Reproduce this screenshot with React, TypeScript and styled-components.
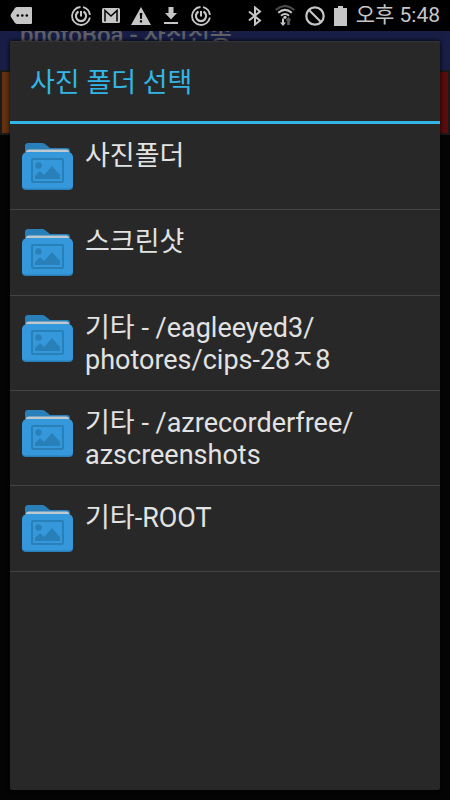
import React from "react";
import styled, { createGlobalStyle } from "styled-components";

const GlobalStyle = createGlobalStyle`
  * { box-sizing: border-box; }
  body {
    margin: 0;
    background: #040404;
    color: #e2e2e2;
    font-family: Roboto, "Noto Sans CJK KR", sans-serif;
  }
`;

const Screen = styled.div`
  position: relative;
  display: flex;
  flex-direction: column;
  min-height: 100vh;
  overflow: hidden;
`;

const StatusBar = styled.header`
  position: relative;
  z-index: 1;
  display: flex;
  justify-content: space-between;
  align-items: center;
  height: 31px;
  padding: 0 10px;
  background: #000;
  color: #c6c6c6;
`;

const StatusGroup = styled.div`
  display: flex;
  align-items: center;
  gap: 10px;
`;

const StatusEnd = styled(StatusGroup)`
  gap: 9px;
`;

const IconSlot = styled.span`
  display: flex;
  justify-content: center;
  width: 20px;
`;

const MoreSlot = styled.span`
  display: flex;
  margin-right: 29px;
`;

const Clock = styled.time`
  font-size: 21px;
  line-height: 31px;
  font-weight: 400;
  white-space: nowrap;
`;

const Icon = styled.svg`
  display: block;
  flex: none;
`;

const AppBar = styled.div`
  height: 39px;
  padding: 0 20px;
  background: #171d45;
`;

const AppTitle = styled.h1`
  margin: -9px 0 0;
  font-size: 24px;
  line-height: 26px;
  font-weight: 500;
  color: #5f6065;
  white-space: nowrap;
`;

const ActionStrip = styled.div`
  display: flex;
  justify-content: space-between;
  height: 65px;
  padding: 2px;
  background: #1a1a1a;
`;

const ActionBlock = styled.div<{ $color: string }>`
  flex: 1;
  background: ${(p) => p.$color};
`;

const Dialog = styled.section`
  position: absolute;
  inset: 41px 10px 10px;
  display: flex;
  flex-direction: column;
  background: #282828;
  border-radius: 2px;
  box-shadow: 0 0 4px #000, inset 0 1px 0 #343434;
`;

const DialogTitle = styled.h2`
  margin: 0;
  padding: 26px 20px 22px;
  font-size: 27px;
  line-height: 32px;
  font-weight: 400;
  color: #33b5e5;
  border-bottom: 3px solid #33b5e5;
`;

const FolderList = styled.ul`
  margin: 0;
  padding: 0;
  list-style: none;
`;

const FolderItem = styled.li`
  border-bottom: 1px solid #434343;
`;

const FolderButton = styled.button`
  display: flex;
  align-items: flex-start;
  gap: 12px;
  width: 100%;
  padding: 0 12px;
  border: 0;
  background: none;
  color: inherit;
  font: inherit;
  text-align: left;
  cursor: pointer;
`;

const FolderArt = styled(Icon)`
  margin: 19px 0;
`;

const FolderName = styled.span`
  padding: 16px 0 14px;
  font-size: 27px;
  line-height: 32px;
  white-space: pre-line;
`;

const FolderIcon = () => (
  <FolderArt width="51" height="47" viewBox="0 0 51 47" aria-hidden="true">
    <path d="M3 12V3q0-3 3-3h14q2 0 3 1l5 4h17q3 0 3 3v6H3z" fill="#2980b9" />
    <path d="M4 9q0-2.500 3-2.500h37q3 0 3 2.500v2H4z" fill="#bdc8d0" />
    <path d="M0 14q0-2 1.500-3.500T5 9h41q2 0 3.500 1.500T51 14v28H0z" fill="#3498db" />
    <path d="M0 40v3q0 4 4 4h43q4 0 4-4v-3z" fill="#2980b9" />
    <path d="M0 38v4q0 3.500 4 3.500h43q4 0 4-3.500v-4z" fill="#3498db" />
    <rect x="10" y="16" width="31" height="23" rx="1" fill="none" stroke="#2980b9" strokeWidth="2" />
    <circle cx="16.500" cy="22.500" r="3.200" fill="#2980b9" />
    <path d="M13 36v-3l5-5 4 4 8-9 8 9v4z" fill="#2980b9" />
  </FolderArt>
);

const MoreIcon = () => (
  <Icon width="22" height="17" viewBox="0 0 22 17" aria-hidden="true">
    <path d="M7 0h14q1 0 1 1v15q0 1-1 1H7q-1 0-2-1L1 10q-1-1.500 0-3l4-6q1-1 2-1z" fill="currentColor" />
    <g fill="#000">
      <circle cx="7.800" cy="8.500" r="1.300" />
      <circle cx="12.300" cy="8.500" r="1.300" />
      <circle cx="16.800" cy="8.500" r="1.300" />
    </g>
  </Icon>
);

const RingIcon = () => (
  <Icon width="20" height="20" viewBox="0 0 20 20" fill="none" stroke="currentColor" aria-hidden="true">
    <path d="M12 1.200A9 9 0 0 1 18.900 9" strokeWidth="1.800" />
    <path d="M18.900 11.500A9 9 0 1 1 9.500 1" strokeWidth="1.800" />
    <path d="M12.500 5.500a5.100 5.100 0 1 1-5 0" strokeWidth="2.200" />
    <path d="M10 5v5.500" strokeWidth="2" />
  </Icon>
);

const MailIcon = () => (
  <Icon width="18" height="15" viewBox="0 0 18 15" aria-hidden="true">
    <rect width="18" height="15" rx="1.500" fill="currentColor" />
    <path d="M3 13.500V2.500L9 8l6-5.500v11" fill="none" stroke="#000" strokeWidth="1.500" />
  </Icon>
);

const WarningIcon = () => (
  <Icon width="20" height="18" viewBox="0 0 20 18" aria-hidden="true">
    <path d="M10 0l10 18H0z" fill="currentColor" />
    <path d="M8.700 6h2.600l-.5 6H9.200zM8.900 13.200h2.200v2.200H8.900z" fill="#000" />
  </Icon>
);

const DownloadIcon = () => (
  <Icon width="14" height="17" viewBox="0 0 14 17" fill="currentColor" aria-hidden="true">
    <path d="M4.500 0h5v6H13l-6 6.500L1 6h3.500zM0 15h14v2H0z" />
  </Icon>
);

const BluetoothIcon = () => (
  <Icon width="14" height="20" viewBox="0 0 14 20" fill="none" stroke="currentColor" strokeWidth="2" aria-hidden="true">
    <path d="M1 5.500l11 9-5 4v-17l5 4-11 9" />
  </Icon>
);

const WifiIcon = () => (
  <Icon width="20" height="21" viewBox="0 0 20 21" fill="none" stroke="currentColor" strokeWidth="2" aria-hidden="true">
    <path d="M.700 5Q10-3 19.300 5" stroke="#4c4c4c" />
    <path d="M3.200 7.800Q10 2 16.800 7.800M6 10.700Q10 7.300 14 10.700" />
    <circle cx="10" cy="12.300" r="1.600" fill="currentColor" stroke="none" />
    <path d="M7 13.500v4H5l3 3.500 3-3.500H9v-4z" fill="currentColor" stroke="none" />
    <path d="M12.200 20v-4.500H10.500l3-3.500 3 3.500h-1.700V20z" fill="#5d5d5d" stroke="none" />
  </Icon>
);

const BlockedIcon = () => (
  <Icon width="20" height="20" viewBox="0 0 20 20" fill="none" stroke="currentColor" strokeWidth="2.200" aria-hidden="true">
    <circle cx="10" cy="10" r="8.700" />
    <path d="M4 4l12 12" />
  </Icon>
);

const BatteryIcon = () => (
  <Icon width="13" height="20" viewBox="0 0 13 20" fill="currentColor" aria-hidden="true">
    <path d="M4 0h5v2h4v18H0V2h4z" />
  </Icon>
);

const notificationIcons = [RingIcon, MailIcon, WarningIcon, DownloadIcon, RingIcon];
const radioIcons = [BluetoothIcon, WifiIcon, BlockedIcon];

const folders = [
  "사진폴더",
  "스크린샷",
  "기타 - /eagleeyed3/\nphotores/cips-28ㅈ8",
  "기타 - /azrecorderfree/\nazscreenshots",
  "기타-ROOT",
];

export default function App() {
  return (
    <Screen>
      <GlobalStyle />
      <StatusBar>
        <StatusGroup>
          <MoreSlot>
            <MoreIcon />
          </MoreSlot>
          {notificationIcons.map((Glyph, i) => (
            <IconSlot key={i}>
              <Glyph />
            </IconSlot>
          ))}
        </StatusGroup>
        <StatusEnd>
          <StatusGroup>
            {radioIcons.map((Glyph, i) => (
              <IconSlot key={i}>
                <Glyph />
              </IconSlot>
            ))}
          </StatusGroup>
          <BatteryIcon />
          <Clock>오후 5:48</Clock>
        </StatusEnd>
      </StatusBar>
      <AppBar>
        <AppTitle>photoBoa - 사진전송</AppTitle>
      </AppBar>
      <ActionStrip>
        <ActionBlock $color="#633010" />
        <ActionBlock $color="#5a0c0c" />
      </ActionStrip>
      <Dialog role="dialog" aria-labelledby="folder-dialog-title">
        <DialogTitle id="folder-dialog-title">사진 폴더 선택</DialogTitle>
        <FolderList>
          {folders.map((name) => (
            <FolderItem key={name}>
              <FolderButton type="button">
                <FolderIcon />
                <FolderName>{name}</FolderName>
              </FolderButton>
            </FolderItem>
          ))}
        </FolderList>
      </Dialog>
    </Screen>
  );
}
